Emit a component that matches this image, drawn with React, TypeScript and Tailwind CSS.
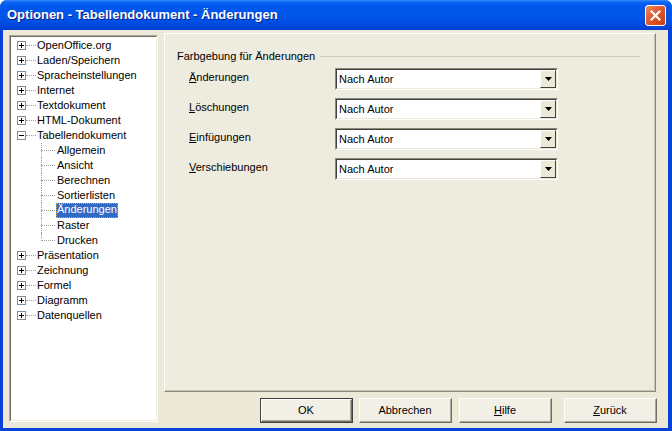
import React from 'react';

// ============================================
// Optionen dialog (XP look)
// ============================================

const FONT = { fontFamily: '"Liberation Sans", Arial, sans-serif' };

type TreeNode = { label: string; expanded?: boolean; children?: string[] };

const tree: TreeNode[] = [
    { label: 'OpenOffice.org' },
    { label: 'Laden/Speichern' },
    { label: 'Spracheinstellungen' },
    { label: 'Internet' },
    { label: 'Textdokument' },
    { label: 'HTML-Dokument' },
    {
        label: 'Tabellendokument',
        expanded: true,
        children: ['Allgemein', 'Ansicht', 'Berechnen', 'Sortierlisten', 'Änderungen', 'Raster', 'Drucken'],
    },
    { label: 'Präsentation' },
    { label: 'Zeichnung' },
    { label: 'Formel' },
    { label: 'Diagramm' },
    { label: 'Datenquellen' },
];

const selected = 'Änderungen';

function Expander({ open }: { open?: boolean }) {
    return (
        <div className="relative w-[9px] h-[9px] border border-[#7f8e9c] bg-white flex-shrink-0">
            <div className="absolute left-[1px] top-[3px] w-[5px] h-[1px] bg-black" />
            {!open && <div className="absolute left-[3px] top-[1px] w-[1px] h-[5px] bg-black" />}
        </div>
    );
}

function Tree() {
    return (
        <div className="pt-[1px]">
            {tree.map((node) => (
                <div key={node.label}>
                    <div className="flex items-center h-[15px] pl-[6px]">
                        <Expander open={node.expanded} />
                        <div className="w-[10px] border-t border-dotted border-[#a0a0a0]" />
                        <span className="ml-[1px] leading-[13px]">{node.label}</span>
                    </div>
                    {node.expanded &&
                        node.children?.map((child, i) => {
                            const last = i === node.children!.length - 1;
                            return (
                                <div key={child} className="flex items-center h-[15px]">
                                    <div className="w-[30px] flex-shrink-0" />
                                    <div className="relative w-[15px] h-full flex-shrink-0">
                                        <div
                                            className={`absolute left-0 top-0 border-l border-dotted border-[#a0a0a0] ${last ? 'h-[8px]' : 'h-full'}`}
                                        />
                                        <div className="absolute left-0 top-[7px] w-[14px] border-t border-dotted border-[#a0a0a0]" />
                                    </div>
                                    {child === selected ? (
                                        <span className="bg-[#316ac5] text-white px-[1px] h-[15px] leading-[13px] outline outline-1 outline-dotted outline-[#e8a03c] -outline-offset-1">
                                            {child}
                                        </span>
                                    ) : (
                                        <span className="ml-[1px] leading-[13px]">{child}</span>
                                    )}
                                </div>
                            );
                        })}
                </div>
            ))}
        </div>
    );
}

function Combo() {
    return (
        <div className="w-[223px] h-[22px] border-t border-l border-[#8c8978] border-b border-r border-b-white border-r-white">
            <div className="h-full border-t border-l border-[#404040] border-b border-r border-b-[#ece9d8] border-r-[#ece9d8] bg-white flex items-center">
                <span className="flex-1 pl-[2px]">Nach Autor</span>
                <div className="w-[16px] h-full bg-[#ece9d8] border-t border-l border-white border-b border-r border-b-[#404040] border-r-[#404040] flex items-center justify-center">
                    <svg width="7" height="4" viewBox="0 0 7 4">
                        <path d="M0 0h7L3.5 4z" fill="black" />
                    </svg>
                </div>
            </div>
        </div>
    );
}

function Button({ children, isDefault }: { children: React.ReactNode; isDefault?: boolean }) {
    return (
        <div
            className={`w-[93px] h-[25px] ${isDefault ? 'border border-[#404040]' : ''}`}
        >
            <div className="h-full border-t border-l border-white border-b border-r border-b-[#716f64] border-r-[#716f64] bg-[#f1efe6]">
                <div className="h-full border-b border-r border-[#aca899] flex items-center justify-center">
                    {children}
                </div>
            </div>
        </div>
    );
}

const rows = [
    { mn: 'Ä', rest: 'nderungen' },
    { mn: 'L', rest: 'öschungen' },
    { mn: 'E', rest: 'infügungen' },
    { mn: 'V', rest: 'erschiebungen' },
];

export default function App() {
    return (
        <div
            className="w-[672px] h-[431px] bg-[#0842d8] rounded-t-[7px] flex flex-col overflow-hidden text-[11px] text-black"
            style={FONT}
        >
            {/* Title bar */}
            <div className="h-[30px] flex items-center pl-[7px] pr-[6px] bg-[linear-gradient(to_bottom,#3b8cfa_0%,#0f6af4_6%,#0058ee_18%,#0054e8_60%,#0049dc_85%,#003fcf_100%)]">
                <span className="flex-1 text-white font-bold text-[13px] [text-shadow:1px_1px_0_#0a1e8c]">
                    Optionen - Tabellendokument - Änderungen
                </span>
                <div className="w-[21px] h-[21px] rounded-[3px] border border-white bg-[linear-gradient(135deg,#ea8a6a_0%,#e05a2c_45%,#c63d12_100%)] flex items-center justify-center">
                    <svg width="11" height="11" viewBox="0 0 11 11">
                        <path d="M1.5 1.5l8 8M9.5 1.5l-8 8" stroke="white" strokeWidth="2.2" strokeLinecap="square" />
                    </svg>
                </div>
            </div>

            {/* Client */}
            <div className="flex-1 mx-[3px] mb-[3px] mr-[4px] bg-[#ece9d8] flex">
                {/* Tree */}
                <div className="ml-[6px] mt-[5px] mb-[6px] w-[149px] border-t border-l border-[#aca899] border-b border-r border-b-white border-r-white">
                    <div className="h-full border-t border-l border-[#716f64] border-b border-r border-b-[#f1efe2] border-r-[#f1efe2] bg-white">
                        <Tree />
                    </div>
                </div>

                {/* Right side */}
                <div className="ml-[6px] mt-[3px] flex flex-col">
                    <div className="w-[492px] h-[359px] bg-[#eeebdf] border-t border-l border-white border-b border-r border-b-[#8c8978] border-r-[#8c8978]">
                        <div className="h-full border-b border-r border-[#c8c4b4] pt-[16px] pl-[12px] pr-[14px]">
                            <div className="flex items-center h-[13px]">
                                <span>Farbgebung für Änderungen</span>
                                <div className="flex-1 ml-[5px] border-t border-[#d0ccbc]" />
                            </div>
                            <div className="mt-[5px] flex flex-col gap-[8px]">
                                {rows.map((r) => (
                                    <div key={r.mn} className="flex items-center h-[22px]">
                                        <span className="w-[158px] pl-[12px] pb-[3px]">
                                            <u>{r.mn}</u>
                                            {r.rest}
                                        </span>
                                        <Combo />
                                    </div>
                                ))}
                            </div>
                        </div>
                    </div>

                    {/* Buttons */}
                    <div className="flex mt-[6px] pl-[96px]">
                        <Button isDefault>OK</Button>
                        <div className="ml-[6px]">
                            <Button>Abbrechen</Button>
                        </div>
                        <div className="ml-[7px]">
                            <Button>
                                <span>
                                    <u>H</u>ilfe
                                </span>
                            </Button>
                        </div>
                        <div className="ml-[12px]">
                            <Button>
                                <span>
                                    <u>Z</u>urück
                                </span>
                            </Button>
                        </div>
                    </div>
                </div>
            </div>
        </div>
    );
}
